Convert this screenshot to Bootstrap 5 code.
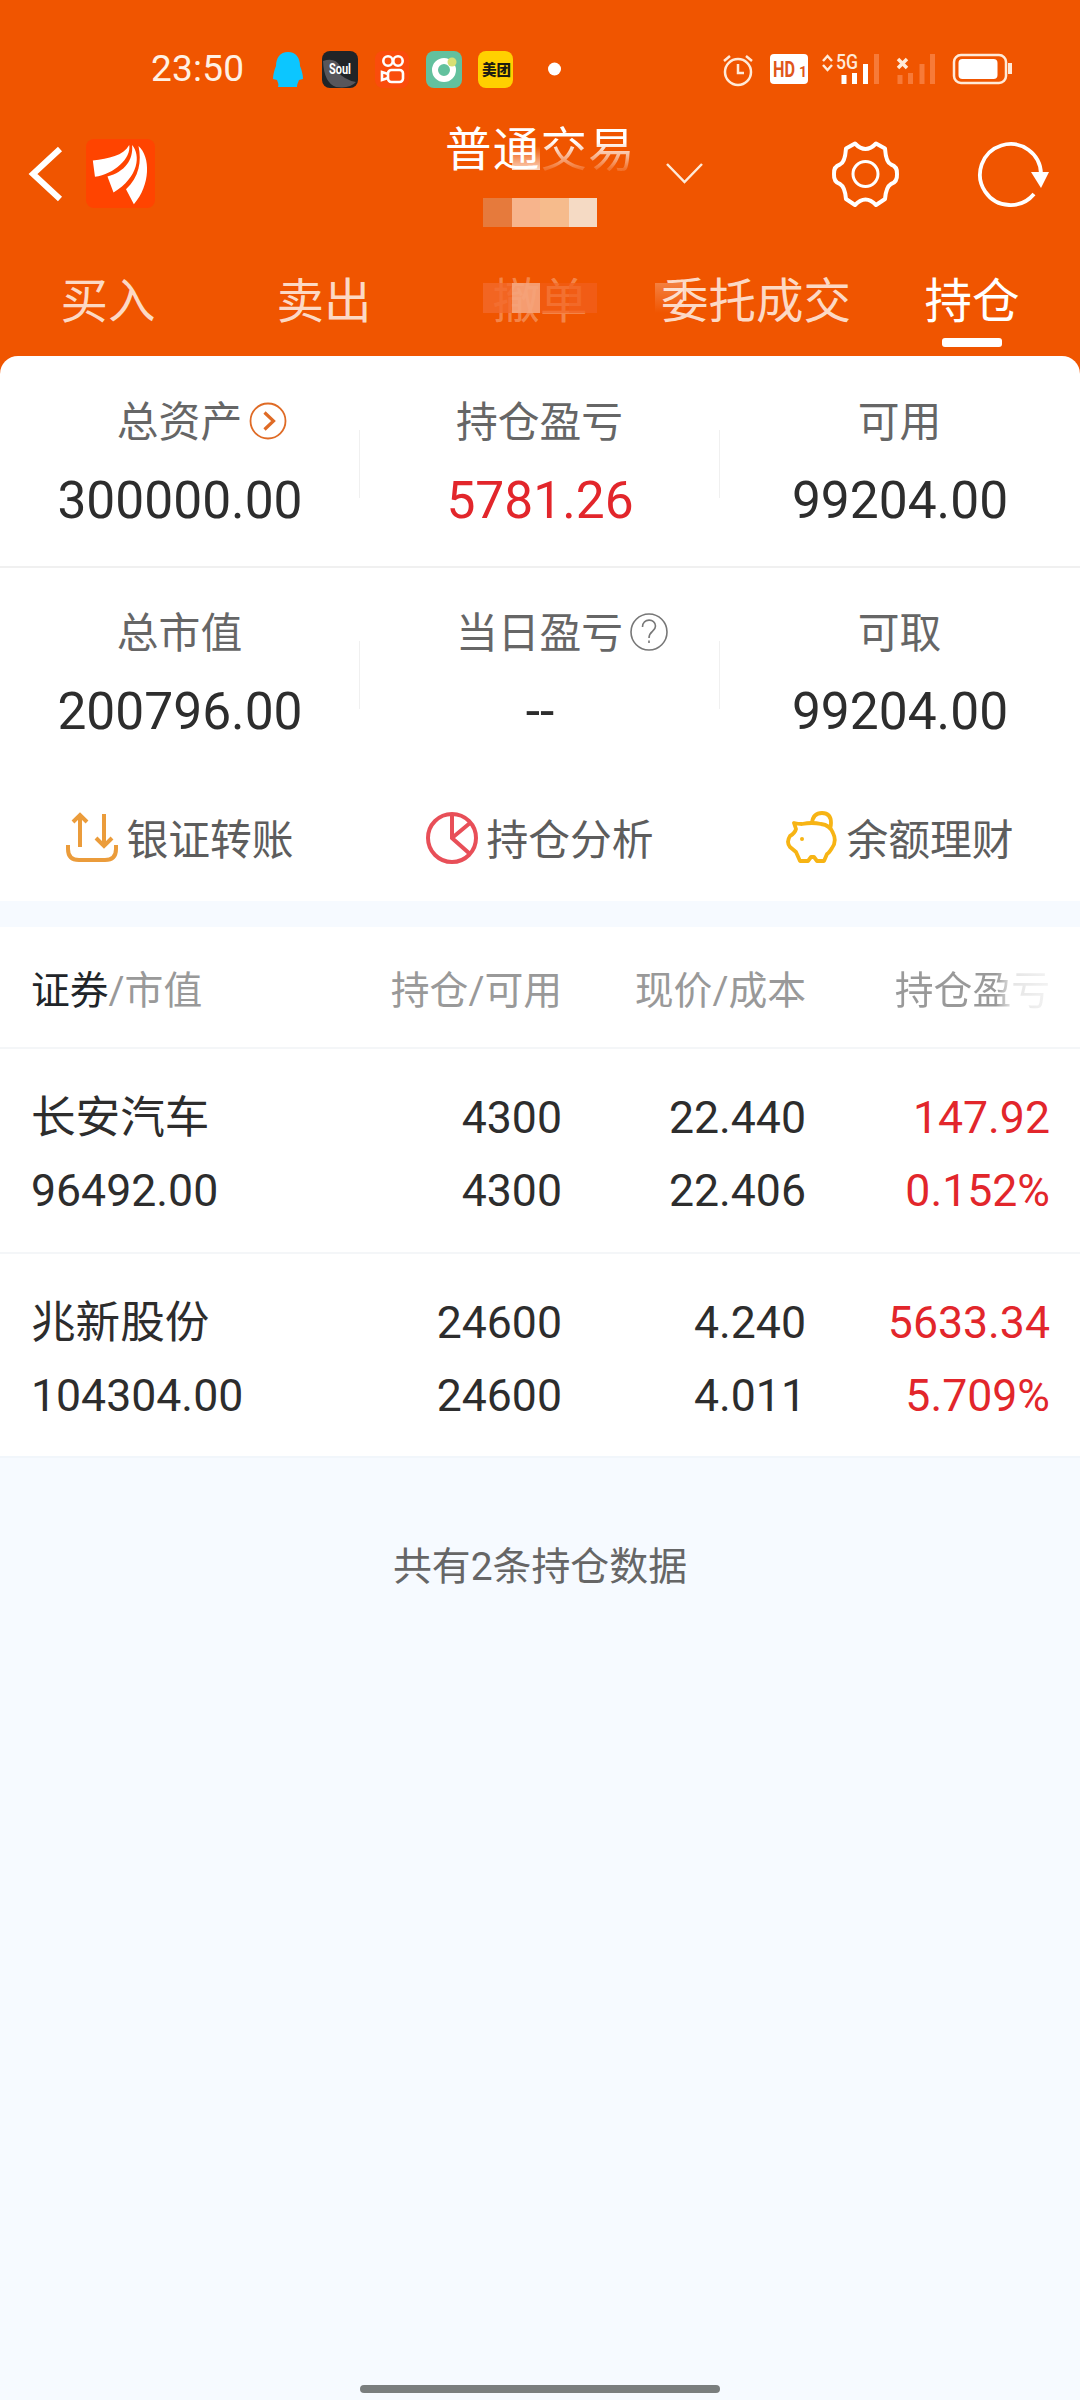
<!DOCTYPE html>
<html lang="zh-CN">
<head>
<meta charset="utf-8">
<meta name="viewport" content="width=device-width, initial-scale=1">
<title>持仓</title>
<link href="https://cdn.jsdelivr.net/npm/bootstrap@5.3.0/dist/css/bootstrap.min.css" rel="stylesheet">
<style>
  body { background:#f6faff; color:#2d2d2d; font-family:Roboto,"Noto Sans CJK SC",sans-serif; min-height:2400px; }
  svg { display:block; flex:none; }
  .top-area { background:#f05500; height:374px; color:#fff; }
  .status-bar { height:137px; padding-left:151px; }
  .clock { font-size:37px; line-height:40px; width:121px; letter-spacing:.2px; color:#fff1e4; }
  .title-bar { height:91px; }
  .title-text { font-size:46.5px; letter-spacing:1.2px; line-height:58px; margin:-16px 0 0 285px; }
  .title-text span { background:linear-gradient(#fff 35%,rgba(255,255,255,.18) 85%); -webkit-background-clip:text; background-clip:text; color:transparent; }
  .signal-icons { margin-right:66px; }
  .tabs-line { height:128px; padding-top:46px; }
  .tab-item { width:20%; font-size:47.5px; line-height:56px; color:#fcd9c5; }
  .tab-item.current { color:#fff; }
  .tab-item.faded { color:rgba(255,255,255,.3); }
  .tab-bar { width:60px; height:9px; border-radius:3px; background:#fff; margin-top:8px; }
  .mosaic { left:483px; width:114px; height:29px; z-index:2; }
  .mosaic i { flex:1; }
  .mosaic-id { top:198px; }
  .mosaic-tab { top:283px; height:30px; }
  .patch-title { left:512px; top:146px; width:28px; height:24px; background:linear-gradient(rgba(255,255,255,0),rgba(255,255,255,.75)); }
  .patch-tab { left:655px; top:283px; width:29px; height:30px; background:linear-gradient(rgba(255,255,255,.25),rgba(255,255,255,0)); }
  .panel { background:#fff; border-radius:18px 18px 0 0; margin-top:-18px; height:545px; position:relative; }
  .stat-row { height:210px; padding-top:36px; }
  .stat-row.ruled { border-bottom:2px solid #f0f0f0; height:212px; padding-top:37px; }
  .stat { width:360px; position:relative; }
  .stat + .stat::before { content:""; position:absolute; left:-1px; top:37px; height:68px; border-left:1.5px solid #f0f0f0; }
  .stat-label { font-size:41.8px; line-height:60px; color:#666; left:-.5px; position:relative; }
  .stat-value { font-size:51.5px; line-height:60px; margin-top:18px; }
  .label-icon { position:absolute; left:100%; top:9px; margin-left:7px; }
  .gain { color:#e2262b; }
  .action { width:360px; font-size:41.8px; line-height:60px; color:#5d5d5d; gap:8px; }
  .action svg { margin-top:-1px; }
  .action-row { height:122px; padding-top:33px; }
  .holdings { background:#fff; margin-top:26px; }
  .h-line { padding:0 30px 0 31px; }
  .h-head { height:122px; font-size:38.8px; line-height:60px; padding-top:34px; color:#999; border-bottom:2px solid #f4f6f8; }
  .h-item { height:205px; padding-top:33px; font-size:44.6px; line-height:73px; border-bottom:2px solid #f4f6f8; }
  .h-item:last-child { border-color:#f1f6fb; height:204px; }
  .c-name { width:270px; } .c-qty { width:261px; } .c-price { width:244px; } .c-gain { width:244px; }
  .fade-end { background:linear-gradient(90deg,#999 65%,#e4e4e4 75%,#f3f3f3); -webkit-background-clip:text; background-clip:text; color:transparent; }
  .foot-note { font-size:38.9px; line-height:60px; margin-top:79px; color:#666; }
  .home-bar { position:fixed; left:360px; top:2385px; width:360px; height:8px; border-radius:4px; background:#7a7e7e; }
</style>
<script src="https://cdn.jsdelivr.net/npm/bootstrap@5.3.0/dist/js/bootstrap.bundle.min.js"></script>
</head>
<body>
<header class="top-area position-relative">
  <div class="status-bar d-flex align-items-center">
    <span class="clock">23:50</span>
    <svg width="290" height="40" viewBox="272 48 290 40">
      <path d="M288 51c-8 0-12 6-12 14-2 5-3 9-3 13l4 1c1 3 2 4 1 7h19c0-3 1-4 2-7l4-1c0-4-1-8-3-13 0-8-4-14-12-14z" fill="#0cc6ff"/>
      <rect x="322" y="50" width="36" height="37" rx="8" fill="#202427"/>
      <path d="M323 60q12-4 17 5l-4 4q8 10 20 12-6 7-20 5-12-4-13-26z" fill="#57565b"/>
      <text x="329" y="73" font-size="15" font-weight="700" fill="#fff" textLength="22" lengthAdjust="spacingAndGlyphs">Soul</text>
      <rect x="375" y="50" width="34" height="37" rx="8" fill="#fa4c0c"/>
      <g fill="none" stroke="#fff" stroke-width="2.6"><circle cx="388" cy="60" r="4.700"/><circle cx="398" cy="60" r="4.700"/><rect x="388" y="69" width="15" height="12" rx="3.500"/><path d="M388 73l-6-2v8l6-2"/></g>
      <rect x="426" y="50" width="36" height="37" rx="8" fill="#62c19e"/>
      <circle cx="444" cy="69" r="9" fill="none" stroke="#fff" stroke-width="6"/><circle cx="452" cy="61" r="4.500" fill="#d7df73"/>
      <rect x="478" y="50" width="35" height="37" rx="8" fill="#ffd000"/>
      <text x="482" y="74" font-size="14.500" font-weight="900" fill="#1c1c12">美团</text>
      <circle cx="554.500" cy="68" r="6.500" fill="#fff"/>
    </svg>
    <svg class="ms-auto signal-icons" width="294" height="40" viewBox="720 48 294 40" fill="none" stroke="#ffead8" stroke-width="2.5">
      <circle cx="738" cy="71" r="13"/><path d="M738 63v9h6M724 60l6-5M752 60l-6-5"/>
      <rect x="770" y="53" width="38" height="30" rx="4" fill="#fff" stroke="none"/>
      <text x="773" y="76" font-size="22" font-weight="700" fill="#e0561a" stroke="none" textLength="22" lengthAdjust="spacingAndGlyphs">HD</text>
      <text x="799" y="76" font-size="14" font-weight="700" fill="#e0561a" stroke="none">1</text>
      <path d="M823 60l4.500-5 4.500 5M823 64l4.500 5 4.500-5"/>
      <text x="836" y="68" font-size="20" font-weight="500" fill="#ffead8" stroke="none" textLength="22" lengthAdjust="spacingAndGlyphs">5G</text>
      <path d="M844 74v9M854.500 72v11M865.500 63v20" stroke="#fff" stroke-width="5"/>
      <path d="M876.500 53v30M900 74v9M910.500 72v11M922 63v20M932.500 53v30" stroke="#f77a38" stroke-width="5"/>
      <path d="M898 58l9 9M907 58l-9 9" stroke-width="3.500"/>
      <rect x="954" y="54" width="52" height="28" rx="7"/><rect x="958.500" y="58" width="39" height="20" rx="4" fill="#fff" stroke="none"/><path d="M1010 62v11" stroke-width="4"/>
    </svg>
  </div>
  <div class="title-bar position-relative d-flex">
    <svg width="160" height="76" viewBox="0 137 160 76">
      <path d="M60 149L33 174l27 25" fill="none" stroke="#fff" stroke-width="6"/>
      <rect x="86" y="139" width="69" height="69" rx="8" fill="#ff4400"/>
      <g transform="translate(0 30) scale(.357 .333)" fill="#fff">
        <path d="M260 392C305 385 345 378 362 345C368 385 320 432 266 441Z"/>
        <path d="M301 440C350 425 374 390 370 345C394 375 390 440 318 488Z"/>
        <path d="M388 348C422 380 422 465 375 523L353 478C390 440 397 395 388 348Z"/>
      </g>
    </svg>
    <div class="title-text text-nowrap">普通<span>交易</span></div>
    <svg class="ms-auto" width="420" height="76" viewBox="660 137 420 76" fill="none" stroke="#fff" stroke-width="3">
      <path d="M667 164l17.500 18 17.500-18" stroke="#ffead8" stroke-width="2.500"/>
      <circle cx="865.500" cy="174" r="12.500"/>
      <path d="M855 143.500q10.500 11 21 0l9 5q1 14 6 16 6.500 2 6 9.500q.5 8-6 10-5 3-6 15l-9 6q-10.500-11-21 0l-9-6q-1-12-6-15-6.500-2-6-10-.5-7.500 6-9.500 5-2 6-16z" stroke-linejoin="round" stroke-width="4"/>
      <path d="M1041 174a30.500 30.500 0 1 0-7 20" stroke-width="3.800"/><path d="M1031 172h18l-8 16z" fill="#fff" stroke="none"/>
    </svg>
  </div>
  <nav class="tabs-line d-flex text-center">
    <div class="tab-item">买入</div>
    <div class="tab-item">卖出</div>
    <div class="tab-item faded">撤单</div>
    <div class="tab-item text-nowrap">委托成交</div>
    <div class="tab-item current">持仓<div class="tab-bar mx-auto"></div></div>
  </nav>
  <div class="mosaic mosaic-id d-flex position-absolute"><i style="background:#e67a3c"></i><i style="background:#f7b48c"></i><i style="background:#f6bb8c"></i><i style="background:#f5dac4"></i></div>
  <div class="mosaic mosaic-tab d-flex position-absolute"><i style="background:#f2692bcc"></i><i style="background:#f5a47ce6"></i><i style="background:#f2601c88"></i><i style="background:#f2601cbb"></i></div>
  <div class="patch-title position-absolute"></div>
  <div class="patch-tab position-absolute"></div>
</header>

<main>
  <section class="panel">
    <div class="stat-row ruled d-flex text-center">
      <div class="stat">
        <div class="stat-label d-inline-block">总资产
          <svg class="label-icon" width="38" height="38" viewBox="0 0 38 38" fill="none" stroke="#df6b26"><circle cx="19" cy="19" r="17.500" stroke-width="1.800"/><path d="M15.500 10.500l9 8.500-9 8.500" stroke-width="3.200"/></svg>
        </div>
        <div class="stat-value">300000.00</div>
      </div>
      <div class="stat"><div class="stat-label">持仓盈亏</div><div class="stat-value gain">5781.26</div></div>
      <div class="stat"><div class="stat-label">可用</div><div class="stat-value">99204.00</div></div>
    </div>
    <div class="stat-row d-flex text-center">
      <div class="stat"><div class="stat-label">总市值</div><div class="stat-value">200796.00</div></div>
      <div class="stat">
        <div class="stat-label d-inline-block">当日盈亏
          <svg class="label-icon" width="38" height="38" viewBox="0 0 38 38" fill="none" stroke="#777" stroke-width="1.600"><circle cx="19" cy="19" r="18"/><path d="M12.500 14c0-9 13-9 13-1 0 6-6.500 5-6.500 12M19 27.500v2.500"/></svg>
        </div>
        <div class="stat-value">--</div>
      </div>
      <div class="stat"><div class="stat-label">可取</div><div class="stat-value">99204.00</div></div>
    </div>
    <div class="action-row d-flex">
      <div class="action d-flex justify-content-center">
        <svg width="52" height="54" viewBox="66 810 52 54" fill="none" stroke="#eb9c3b" stroke-width="4"><path d="M68 845v4q0 11 11 11h26q11 0 11-11v-4M80 847v-32M73 822l7-7 7 7M104 814v31M96 838l8 8 8-8"/></svg>
        <span>银证转账</span>
      </div>
      <div class="action d-flex justify-content-center">
        <svg width="52" height="54" viewBox="426 810 52 54" fill="none" stroke="#e84f58" stroke-width="4"><circle cx="452" cy="838" r="24"/><path d="M452 814v24l18 16M452 838l18-15"/></svg>
        <span>持仓分析</span>
      </div>
      <div class="action d-flex justify-content-center">
        <svg width="52" height="54" viewBox="786 810 52 54" fill="none" stroke="#f7b414" stroke-width="3.800" stroke-linejoin="round"><path d="M794 823q4 1 8 1 10-2 19 0 9 1 12 9 4 8-1 15-3 5-5 6l-3 7h-7l-3-4h-3l-3 4h-8l-4-9-6-5q-4-5 0-11 5-3 6-7z"/><path d="M812 823q1-10 10-10t9 10q0 3-1 6"/><circle cx="802" cy="839" r="2" fill="#f7b414" stroke="none"/></svg>
        <span>余额理财</span>
      </div>
    </div>
  </section>

  <section class="holdings">
    <div class="h-line h-head d-flex">
      <div class="c-name"><span class="text-dark">证券</span>/市值</div>
      <div class="c-qty text-end">持仓/可用</div>
      <div class="c-price text-end">现价/成本</div>
      <div class="c-gain text-end"><span class="fade-end">持仓盈亏</span></div>
    </div>
    <div class="h-line h-item d-flex">
      <div class="c-name">长安汽车<br>96492.00</div>
      <div class="c-qty text-end">4300<br>4300</div>
      <div class="c-price text-end">22.440<br>22.406</div>
      <div class="c-gain text-end gain">147.92<br>0.152%</div>
    </div>
    <div class="h-line h-item d-flex">
      <div class="c-name">兆新股份<br>104304.00</div>
      <div class="c-qty text-end">24600<br>24600</div>
      <div class="c-price text-end">4.240<br>4.011</div>
      <div class="c-gain text-end gain">5633.34<br>5.709%</div>
    </div>
  </section>
  <p class="foot-note text-center mb-0">共有2条持仓数据</p>
</main>
<div class="home-bar"></div>
</body>
</html>
